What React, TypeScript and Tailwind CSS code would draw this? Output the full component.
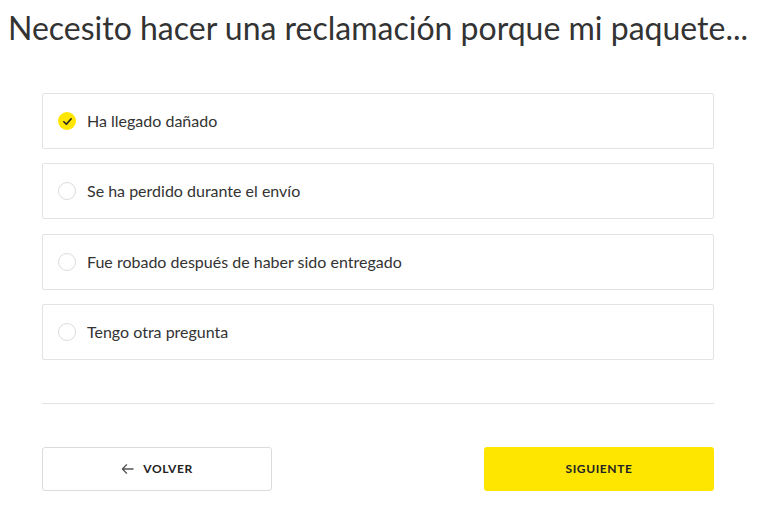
import React, { useState } from "react";

const options = [
  "Ha llegado dañado",
  "Se ha perdido durante el envío",
  "Fue robado después de haber sido entregado",
  "Tengo otra pregunta",
];

const App: React.FC = () => {
  const [selected, setSelected] = useState(0);

  return (
    <div className="w-[760px] h-[511px] bg-white text-[#333333] font-['Lato',sans-serif]">
      {/* Title */}
      <h1 className="pl-[8px] pt-[6px] text-[32px] leading-[44px] font-normal whitespace-nowrap">
        Necesito hacer una reclamación porque mi paquete...
      </h1>

      <div className="px-[42px] pr-[46px] mt-[43px]">
        {/* Options */}
        <div className="flex flex-col gap-[14.3px]">
          {options.map((item, index) => (
            <button
              key={index}
              onClick={() => setSelected(index)}
              className="flex items-center h-[56px] border border-[#e3e3e6] rounded-[2px] pl-[15px] text-left"
            >
              {selected === index ? (
                <span className="w-[18px] h-[18px] rounded-full bg-[#ffe600] flex items-center justify-center">
                  <svg width="11" height="11" viewBox="0 0 12 12" fill="none">
                    <path d="M2 6.3 L4.8 9 L10 3" stroke="#222" strokeWidth="1.8" strokeLinecap="round" strokeLinejoin="round" />
                  </svg>
                </span>
              ) : (
                <span className="w-[18px] h-[18px] rounded-full border border-[#dcdce0] bg-white" />
              )}
              <span className="ml-[11px] text-[16px] text-[#333333]">{item}</span>
            </button>
          ))}
        </div>

        <hr className="mt-[43px] border-[#e3e3e6]" />

        {/* Footer buttons */}
        <div className="flex justify-between mt-[43px]">
          <button className="w-[230px] h-[44px] border border-[#dcdce0] rounded-[3px] flex items-center justify-center gap-[9px] text-[12px] font-bold tracking-[0.6px] text-[#222]">
            <svg width="13" height="12" viewBox="0 0 14 12" fill="none">
              <path d="M13 6 H1.5 M6 1.5 L1.5 6 L6 10.5" stroke="#555" strokeWidth="1.4" strokeLinecap="round" strokeLinejoin="round" />
            </svg>
            VOLVER
          </button>
          <button className="w-[230px] h-[44px] bg-[#ffe600] rounded-[3px] flex items-center justify-center text-[12px] font-bold tracking-[0.6px] text-[#222]">
            SIGUIENTE
          </button>
        </div>
      </div>
    </div>
  );
};

export default App;
